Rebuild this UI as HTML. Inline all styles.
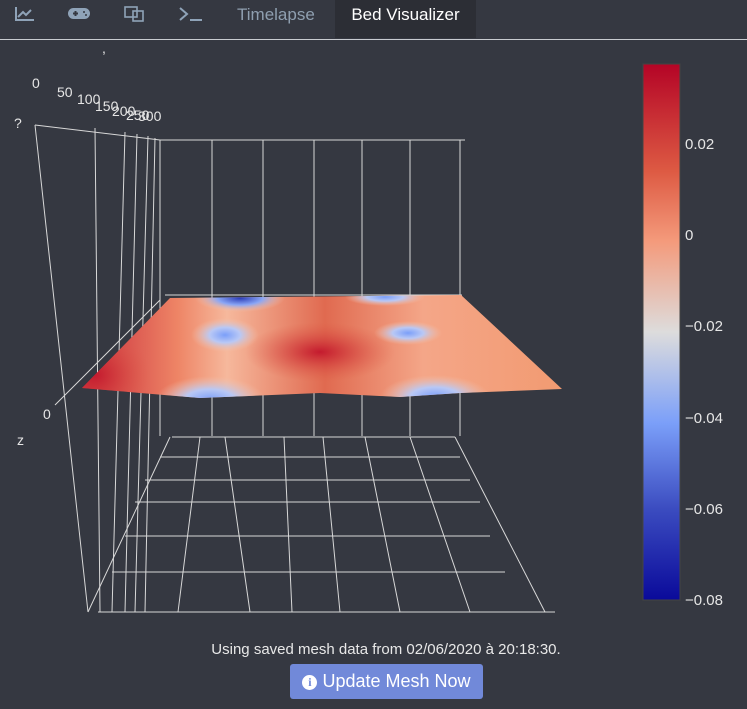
<!DOCTYPE html>
<html><head><meta charset="utf-8"><style>
body{margin:0;width:747px;height:709px;background:#353841;overflow:hidden;font-family:"Liberation Sans",sans-serif;position:relative}
.tabs{position:absolute;left:0;top:0;width:747px;height:39px;border-bottom:1px solid #c8cbd0}
.tab{position:absolute;top:0;height:38px;line-height:30px;font-size:17px}
.msg{position:absolute;top:641px;left:0;width:772px;text-align:center;color:#e8e8e8;font-size:15px}
.btn{position:absolute;left:290px;top:664px;width:193px;height:35px;background:#7189d9;border-radius:3px;color:#fff;font-size:18px;line-height:35px;text-align:center}
</style></head><body>
<div class="tabs">
<svg width="230" height="38" style="position:absolute;left:0;top:0" fill="none" stroke="#8fa3b8" stroke-width="2">
<path d="M16 7v13h18"/><path d="M18 17l5-5 3 3 5-5"/>
<rect x="68" y="8" width="22" height="11" rx="5.5" fill="#8fa3b8" stroke="none"/>
<path d="M73 13.5h5M75.5 11v5" stroke="#353841"/><circle cx="84" cy="12" r="1" fill="#353841" stroke="none"/><circle cx="86" cy="15" r="1" fill="#353841" stroke="none"/>
<rect x="125" y="7" width="12" height="10" stroke-width="1.6"/><rect x="133" y="11" width="10" height="10" stroke-width="1.6"/>
<path d="M180 8l7 6-7 6"/><path d="M190 20h12"/>
</svg>
<div class="tab" style="left:237px;color:#8f9fb0">Timelapse</div>
<div class="tab" style="left:335px;width:141px;background:#2c2e35;color:#fff;text-align:center">Bed Visualizer</div>
</div>
<svg width="747" height="640" style="position:absolute;left:0;top:0" font-family="Liberation Sans,DejaVu Sans,sans-serif">
<defs>
<linearGradient id="cb" x1="0" y1="0" x2="0" y2="1">
<stop offset="0" stop-color="#b40426"/><stop offset="0.2" stop-color="#dd5a43"/><stop offset="0.33" stop-color="#f49a7b"/>
<stop offset="0.5" stop-color="#dddcdc"/><stop offset="0.67" stop-color="#7b9ff9"/><stop offset="0.83" stop-color="#3b4cc0"/><stop offset="1" stop-color="#0a0a9a"/>
</linearGradient>
<linearGradient id="sf" x1="0" y1="0" x2="1" y2="0">
<stop offset="0" stop-color="#c8293a"/><stop offset="0.2" stop-color="#ee8566"/><stop offset="0.3" stop-color="#f6b89c"/>
<stop offset="0.5" stop-color="#e06a50"/><stop offset="0.7" stop-color="#f4a688"/><stop offset="1" stop-color="#f29a70"/>
</linearGradient>
<radialGradient id="bl"><stop offset="0" stop-color="#7b9ff9"/><stop offset="0.45" stop-color="#b9c8f5"/><stop offset="1" stop-color="#f5c4ac" stop-opacity="0"/></radialGradient>
<radialGradient id="db"><stop offset="0" stop-color="#2a3cb8"/><stop offset="0.5" stop-color="#8aa6f5"/><stop offset="1" stop-color="#f5c4ac" stop-opacity="0"/></radialGradient>
<radialGradient id="rd"><stop offset="0" stop-color="#c41a2e"/><stop offset="1" stop-color="#de5a45" stop-opacity="0"/></radialGradient>
<clipPath id="cp"><path d="M82 388L170 298L461 295L562 389L460 393L400 397L320 393L200 398Z"/></clipPath>
</defs>
<g stroke="#d8d8d8" stroke-width="1" fill="none">
<path d="M35 125L160 140H465"/>
<path d="M160 140V436M212 140V436M263 140V436M314 140V436M362 140V436M410 140V436M460 140V436"/>
<path d="M35 125L88 612M95 128L100 612M125 132L112 612M137 134L125 612M148 136L135 612M155 138L145 612"/>
<path d="M172 437H455M160 457H460M145 480H470M135 502H480M125 536H490M112 572H505M98 612H555"/>
<path d="M170 437L88 612M200 437L178 612M225 437L250 612M284 437L292 612M323 437L340 612M365 437L400 612M410 437L470 612M455 437L545 612"/>
<path d="M55 405L160 300M165 295H462"/>
</g>
<g clip-path="url(#cp)">
<rect x="80" y="290" width="490" height="115" fill="url(#sf)"/>
<ellipse cx="240" cy="298" rx="45" ry="14" fill="url(#db)"/>
<ellipse cx="385" cy="297" rx="40" ry="9" fill="url(#bl)"/>
<ellipse cx="225" cy="335" rx="34" ry="17" fill="url(#bl)"/>
<ellipse cx="408" cy="333" rx="34" ry="12" fill="url(#bl)"/>
<ellipse cx="210" cy="400" rx="55" ry="24" fill="url(#bl)"/>
<ellipse cx="435" cy="397" rx="55" ry="22" fill="url(#bl)"/>
<ellipse cx="320" cy="352" rx="75" ry="30" fill="url(#rd)"/>
<ellipse cx="95" cy="375" rx="55" ry="45" fill="url(#rd)"/>
</g>
<g fill="#e6e6e6" font-size="14">
<text x="32" y="88">0</text><text x="57" y="97">50</text><text x="77" y="104">100</text><text x="95" y="111">150</text><text x="112" y="116">200</text><text x="126" y="120">250</text><text x="138" y="121">300</text>
<text x="102" y="53">,</text><text x="14" y="128">?</text>
<text x="43" y="419">0</text><text x="17" y="445">z</text>
</g>
<rect x="643" y="64" width="37" height="536" fill="url(#cb)" stroke="#444" stroke-width="1"/>
<g fill="#e6e6e6" font-size="15">
<text x="685" y="149">0.02</text><text x="685" y="240">0</text><text x="685" y="331">−0.02</text>
<text x="685" y="423">−0.04</text><text x="685" y="514">−0.06</text><text x="685" y="605">−0.08</text>
</g>
</svg>
<div class="msg">Using saved mesh data from 02/06/2020 à 20:18:30.</div>
<div class="btn"><span style="display:inline-block;width:15px;height:15px;border-radius:50%;background:#fff;color:#7189d9;font-size:12px;line-height:15px;font-weight:bold;vertical-align:1px;font-family:'Liberation Serif',serif">i</span> Update Mesh Now</div>
</body></html>
